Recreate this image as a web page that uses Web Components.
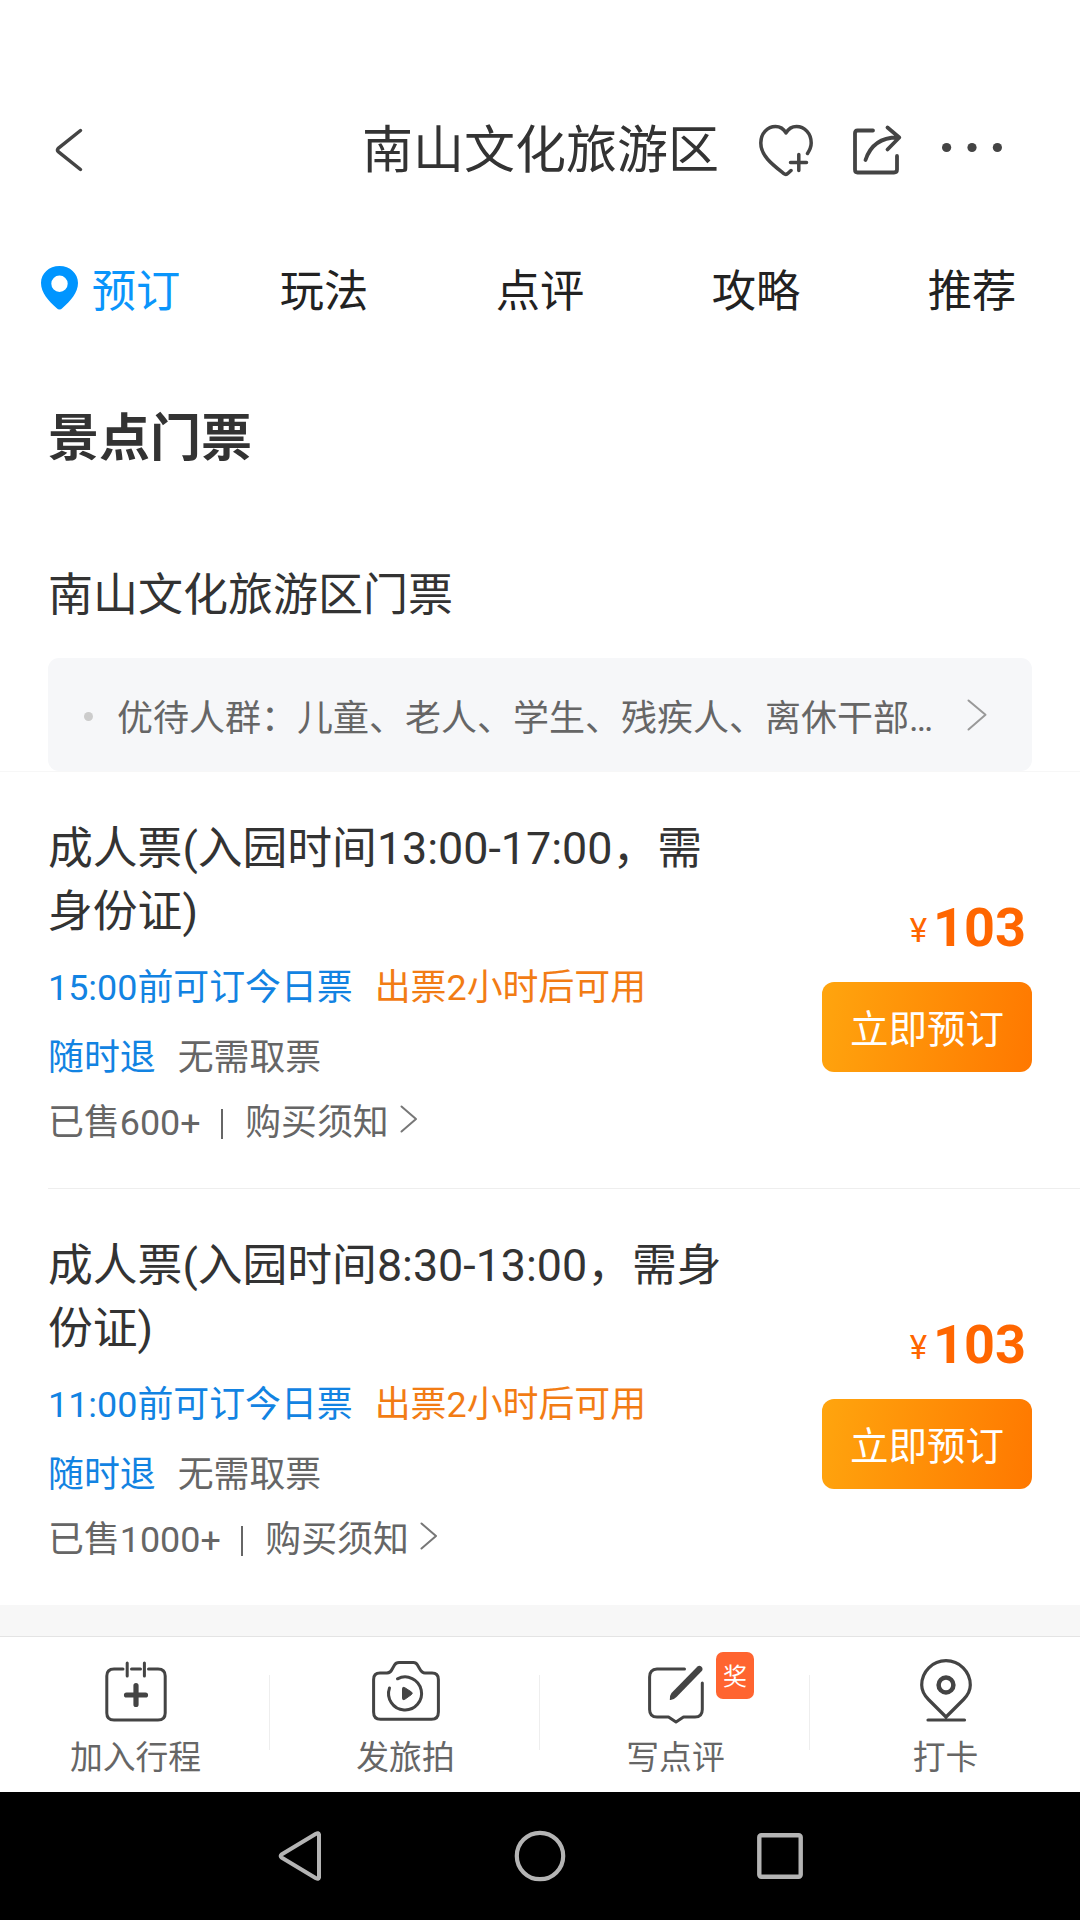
<!DOCTYPE html>
<html lang="zh-CN">
<head>
<meta charset="utf-8">
<title>南山文化旅游区</title>
<style>
    body {
        margin: 0;
        width: 1080px;
        height: 1920px;
        overflow: hidden;
        background: #fff;
        color: #333;
        font-family: Roboto, "Noto Sans CJK SC", sans-serif;
    }
    spot-page {
        height: 1920px;
    }
</style>
</head>
<body>

<template id="spot-page">
    <style>
        :host {
            display: flex;
            flex-direction: column;
        }
        main {
            flex: 1;
            background: #f7f7f7;
        }
    </style>
    <slot name="top"></slot>
    <main><slot></slot></main>
    <slot name="bottom"></slot>
</template>

<template id="spot-header">
    <style>
        :host {
            display: flex;
            align-items: center;
            box-sizing: border-box;
            height: 216px;
            padding: 84px 78px 0 55px;
            color: #444;
        }
        h1 {
            margin: 0 40px 0 auto;
            padding-top: 2px;
            font-size: 51px;
            line-height: 60px;
            font-weight: 400;
            color: #333;
        }
        .actions {
            display: flex;
            align-items: center;
            gap: 40px;
            padding-bottom: 1px;
        }
        .actions ui-icon:last-child {
            margin: 1px 0 0 1px;
        }
    </style>
    <ui-icon name="back"></ui-icon>
    <h1><slot></slot></h1>
    <div class="actions">
        <ui-icon name="heart"></ui-icon>
        <ui-icon name="share"></ui-icon>
        <ui-icon name="more"></ui-icon>
    </div>
</template>

<template id="tab-bar">
    <style>
        :host {
            display: grid;
            grid-template-columns: repeat(5, 1fr);
            height: 144px;
            align-items: center;
        }
    </style>
    <slot></slot>
</template>

<template id="tab-item">
    <style>
        :host {
            display: flex;
            align-items: center;
            justify-content: center;
            gap: 14px;
            font-size: 44.3px;
            line-height: 64px;
            color: #222;
            padding-top: 5px;
        }
        :host([active]) {
            color: #0a95fb;
            padding-left: 5px;
        }
        span {
            padding-top: 2px;
        }
        ui-icon {
            display: none;
            color: #0095ff;
            margin-bottom: 5px;
        }
        :host([active]) ui-icon {
            display: block;
        }
    </style>
    <ui-icon name="marker"></ui-icon>
    <span><slot></slot></span>
</template>

<template id="ticket-section">
    <style>
        :host {
            display: block;
            background: #fff;
        }
        h2, h3 {
            margin: 0;
            padding-left: 48px;
        }
        h2 {
            font-size: 51px;
            line-height: 156px;
            padding-top: 1px;
            font-weight: 700;
        }
        h3 {
            font-size: 45px;
            line-height: 62px;
            padding-top: 48px;
            padding-bottom: 31px;
            font-weight: 400;
        }
        .rule {
            border-bottom: 1px solid #f7f7f7;
        }
    </style>
    <h2><slot name="title"></slot></h2>
    <div class="rule">
        <h3><slot name="group"></slot></h3>
        <slot name="notice"></slot>
    </div>
    <slot></slot>
</template>

<template id="notice-bar">
    <style>
        :host {
            display: flex;
            align-items: center;
            box-sizing: border-box;
            height: 113px;
            margin: 0 48px;
            padding: 0 45px 0 36px;
            background: #f6f7f9;
            border-radius: 11px;
            color: #666;
            font-size: 36px;
            line-height: 52px;
        }
        i {
            width: 9px;
            height: 9px;
            border-radius: 50%;
            background: #ccc;
            margin: 4px 24px 0 0;
        }
        span {
            flex: 1;
            white-space: nowrap;
            padding-top: 8px;
        }
        ui-icon {
            color: #999;
        }
    </style>
    <i></i>
    <span><slot></slot></span>
    <ui-icon name="next"></ui-icon>
</template>

<template id="ticket-card">
    <style>
        :host {
            display: flex;
            justify-content: space-between;
            box-sizing: border-box;
            height: 417px;
            margin-left: 48px;
            padding: 45px 48px 0 0;
            border-bottom: 1px solid #eee;
        }
        :host(:last-of-type) {
            border-bottom: 0;
            height: 416px;
        }
        .info {
            width: 690px;
            font-size: 35.9px;
            line-height: 52px;
            color: #666;
        }
        h4 {
            margin: 0 0 19px;
            font-size: 44.8px;
            line-height: 63px;
            font-weight: 400;
            color: #333;
        }
        .row {
            display: flex;
            align-items: center;
            gap: 22px;
            height: 52px;
            margin-bottom: 18px;
        }
        .row + .row {
            margin-bottom: 13px;
        }
        .blue { color: #1283e2; }
        .orange { color: #f27c14; }
        .foot {
            gap: 0;
        }
        .bar {
            width: 2.5px;
            height: 30px;
            background: #666;
            margin: 1px 22px 0 20px;
        }
        .foot ui-icon {
            margin: -8px 0 0 11px;
            color: #777;
        }
        .buy {
            display: flex;
            flex-direction: column;
            align-items: flex-end;
            padding-top: 79px;
        }
        .price {
            display: flex;
            gap: 6px;
            height: 86px;
            padding-right: 6px;
            color: #ff6600;
            font-size: 33px;
            line-height: 64px;
        }
        .price b {
            font-size: 54px;
        }
        .price span {
            margin-top: 3px;
        }
        button {
            width: 210px;
            height: 90px;
            border: 0;
            padding: 6px 0 0;
            border-radius: 12px;
            background: linear-gradient(100deg, #ffa50e, #ff7800);
            color: #fff;
            font: 38.5px/54px Roboto, "Noto Sans CJK SC", sans-serif;
        }
    </style>
    <div class="info">
        <h4><slot></slot></h4>
        <div class="row">
            <span class="blue"><slot name="deadline"></slot></span>
            <span class="orange">出票2小时后可用</span>
        </div>
        <div class="row">
            <span class="blue">随时退</span>
            <span>无需取票</span>
        </div>
        <div class="row foot">
            <span><slot name="sold"></slot></span>
            <span class="bar"></span>
            <span>购买须知</span>
            <ui-icon name="next-small"></ui-icon>
        </div>
    </div>
    <div class="buy">
        <div class="price"><span>¥</span><b><slot name="price"></slot></b></div>
        <button>立即预订</button>
    </div>
</template>

<template id="action-bar">
    <style>
        :host {
            display: grid;
            grid-template-columns: repeat(4, 1fr);
            box-sizing: border-box;
            height: 156px;
            border-top: 1px solid #e4e4e4;
            background: #fff;
        }
    </style>
    <slot></slot>
</template>

<template id="action-item">
    <style>
        :host {
            display: flex;
            align-items: center;
        }
        .item {
            position: relative;
            flex: 1;
            display: flex;
            flex-direction: column;
            align-items: center;
            padding: 11px 0 0 2px;
            color: #444;
        }
        .label {
            font-size: 32.8px;
            line-height: 48px;
            color: #666;
            margin-top: 11px;
        }
        .badge {
            position: absolute;
            left: 176px;
            top: 4px;
            width: 38px;
            height: 47px;
            border-radius: 7px;
            background: #ff6430;
            color: #fff;
            font-size: 24px;
            line-height: 51px;
            text-align: center;
        }
        :host(:not([badge])) .badge {
            display: none;
        }
        .line {
            width: 1px;
            height: 75px;
            margin-bottom: 5px;
            background: #eee;
        }
        :host(:last-of-type) .line {
            background: none;
        }
    </style>
    <div class="item">
        <ui-icon></ui-icon>
        <span class="badge"></span>
        <span class="label"><slot></slot></span>
    </div>
    <div class="line"></div>
</template>

<template id="system-nav">
    <style>
        :host {
            display: flex;
            align-items: center;
            justify-content: center;
            gap: 191px;
            height: 128px;
            background: #000;
            color: #b4b4b4;
        }
    </style>
    <ui-icon name="nav-back"></ui-icon>
    <ui-icon name="nav-home"></ui-icon>
    <ui-icon name="nav-recent"></ui-icon>
</template>

<spot-page>
    <spot-header slot="top">南山文化旅游区</spot-header>
    <tab-bar slot="top">
        <tab-item active>预订</tab-item>
        <tab-item>玩法</tab-item>
        <tab-item>点评</tab-item>
        <tab-item>攻略</tab-item>
        <tab-item>推荐</tab-item>
    </tab-bar>

    <ticket-section>
        <span slot="title">景点门票</span>
        <span slot="group">南山文化旅游区门票</span>
        <notice-bar slot="notice">优待人群：儿童、老人、学生、残疾人、离休干部…</notice-bar>
        <ticket-card>
            成人票(入园时间13:00-17:00，需身份证)
            <span slot="deadline">15:00前可订今日票</span>
            <span slot="sold">已售600+</span>
            <span slot="price">103</span>
        </ticket-card>
        <ticket-card>
            成人票(入园时间8:30-13:00，需身份证)
            <span slot="deadline">11:00前可订今日票</span>
            <span slot="sold">已售1000+</span>
            <span slot="price">103</span>
        </ticket-card>
    </ticket-section>

    <action-bar slot="bottom">
        <action-item icon="calendar">加入行程</action-item>
        <action-item icon="camera">发旅拍</action-item>
        <action-item icon="write" badge="奖">写点评</action-item>
        <action-item icon="checkin">打卡</action-item>
    </action-bar>
    <system-nav slot="bottom"></system-nav>
</spot-page>

<script type="text/javascript">
// name: [width, height, markup]
const ICONS = {
    'back': [28, 44, '<path d="M25.5 2.5 3.2 20.4Q1.8 22 3.2 23.6L25.5 41.5" stroke-width="3.5"/>'],
    'heart': [54, 52, '<path d="M48.5 29.5C50.8 26 52.2 22.5 52.2 19 52.2 9.5 45.5 2.5 37.5 2.5 33 2.5 29.5 4.5 27 9 24.5 4.5 20.5 2.5 16.5 2.5 8.5 2.5 1.8 9.5 1.8 19 1.8 32 14 41 24.5 49.3Q27 51.3 29 49.3L32 46.5M31.5 38.5H47.5M39.8 30.5V46.5" stroke-width="3.5"/>'],
    'share': [48, 50, '<path d="M20 5.5H4.5Q2 5.5 2 8V44.5Q2 47.5 4.5 47.5H41Q44 47.5 44 44.5V31M12.5 35Q20 12 45.5 12.5M34.5 2.5 46.3 12.5 34.5 24.5" stroke-width="3.8"/>'],
    'more': [60, 50, '<g fill="currentColor" stroke="none"><circle cx="4.6" cy="22.5" r="4.6"/><circle cx="30" cy="22.5" r="4.6"/><circle cx="55.4" cy="22.5" r="4.6"/></g>'],
    'marker': [37, 50, '<path fill="currentColor" stroke="none" fill-rule="evenodd" d="M18.5 3C8 3 0 10.5 0 20 0 29.5 7.5 38 15.5 45Q18.5 48 21.5 45C29.5 38 37 29.5 37 20 37 10.5 29 3 18.5 3ZM18.5 12.5a8.2 8.2 0 1 1 0 16.4a8.2 8.2 0 1 1 0-16.4Z"/>'],
    'next': [20, 32, '<path d="M1.5 1.5 18.5 15.8 1.5 30.5" stroke-width="2"/>'],
    'next-small': [18, 28, '<path d="M1.5 1.5 16 14 1.5 26.5" stroke-width="2"/>'],
    'calendar': [62, 64, '<path d="M18 10H9Q1.8 10 1.8 17V54Q1.8 61 9 61H53Q60.2 61 60.2 54V17Q60.2 10 53 10H43.5M26.5 10H35.5M22.2 4V17M39.4 4V17" stroke-width="3"/><path d="M31 26.5V45.5M21.5 36H40.5" stroke-width="5.2"/>'],
    'camera': [68, 64, '<path d="M8 14H15Q18.5 13.8 20.5 9.5L22.5 6Q24 3.5 27 3.5H41.5Q44 3.5 45.5 6L47.5 9.5Q50 14 53 14H60Q66.4 14 66.4 20.5V53Q66.4 60.3 59.5 60.3H8.5Q1.6 60.3 1.6 53V20.5Q1.6 14 8 14Z" stroke-width="3"/><path d="M25.5 19.8A16.5 16.5 0 1 1 17.5 29" stroke-width="3"/><path d="M30.5 29.5Q30.5 27.5 32.5 28.5L39.5 33Q41 34.3 39.5 35.5L32.5 40.5Q30.5 41.5 30.5 39.5Z" fill="currentColor" stroke-width="1"/>'],
    'write': [56, 64, '<path d="M36.5 10H9Q1.6 10.5 1.6 18V50.5Q1.6 58 9 58H20.5L28 63L35.5 58H47Q54.3 58 54.3 50.5V24" stroke-width="3"/><path d="M49.5 7.6Q51.5 6 53.5 7.8 55.5 10 53.8 12L28.5 38Q25 41.5 21.8 41Q21.2 37 23.5 34Z" fill="currentColor" stroke="none"/>'],
    'checkin': [52, 64, '<path d="M26 58 8.5 40.5C4 36 1.7 31.5 1.7 26a24.3 24.3 0 0 1 48.6 0C50.3 31.5 48 36 43.5 40.5ZM8 61H44.5" stroke-width="3.2"/><circle cx="26" cy="26" r="7.4" stroke-width="4.5"/>'],
    'nav-back': [46, 52, '<path d="M42 4.5V47.5Q41.5 49.5 39 48.3L4.5 27.5Q2.8 26 4.5 24.5L39 3.7Q41.5 2.5 42 4.5Z" stroke-width="4"/>'],
    'nav-home': [52, 52, '<circle cx="26" cy="26" r="23.2" stroke-width="4.2"/>'],
    'nav-recent': [46, 52, '<rect x="2.3" y="5.3" width="41.4" height="41.4" rx="2" stroke-width="4.4"/>']
};

// Clones the template that has the same id as the tag
class SpotElement extends HTMLElement{
    constructor(){
        super();
        this.attachShadow({mode: 'open'});
        const template = document.querySelector(`template#${this.localName}`);
        this.shadowRoot.appendChild(template.content.cloneNode(true));
    }
}

class UiIcon extends HTMLElement{
    constructor(){
        super();
        this.attachShadow({mode: 'open'});
    }

    static get observedAttributes() {
        return [ 'name' ]
    };

    attributeChangedCallback(){
        const icon = ICONS[this.getAttribute('name')];
        if(!icon) return;
        const [w, h, body] = icon;
        this.shadowRoot.innerHTML = `
            <style>
                :host { display: block; flex: none; }
                svg { display: block; overflow: visible; }
            </style>
            <svg width="${w}" height="${h}" viewBox="0 0 ${w} ${h}" fill="none" stroke="currentColor" stroke-linecap="round" stroke-linejoin="round">${body}</svg>`;
    }
}

class ActionItem extends SpotElement{
    connectedCallback(){
        this.shadowRoot.querySelector('ui-icon').setAttribute('name', this.getAttribute('icon'));
        this.shadowRoot.querySelector('.badge').textContent = this.getAttribute('badge') || '';
    }
}

window.customElements.define('ui-icon', UiIcon);
window.customElements.define('action-item', ActionItem);
['spot-page', 'spot-header', 'tab-bar', 'tab-item', 'ticket-section', 'notice-bar', 'ticket-card', 'action-bar', 'system-nav'].forEach(tag => {
    window.customElements.define(tag, class extends SpotElement{});
});
</script>
</body>
</html>
